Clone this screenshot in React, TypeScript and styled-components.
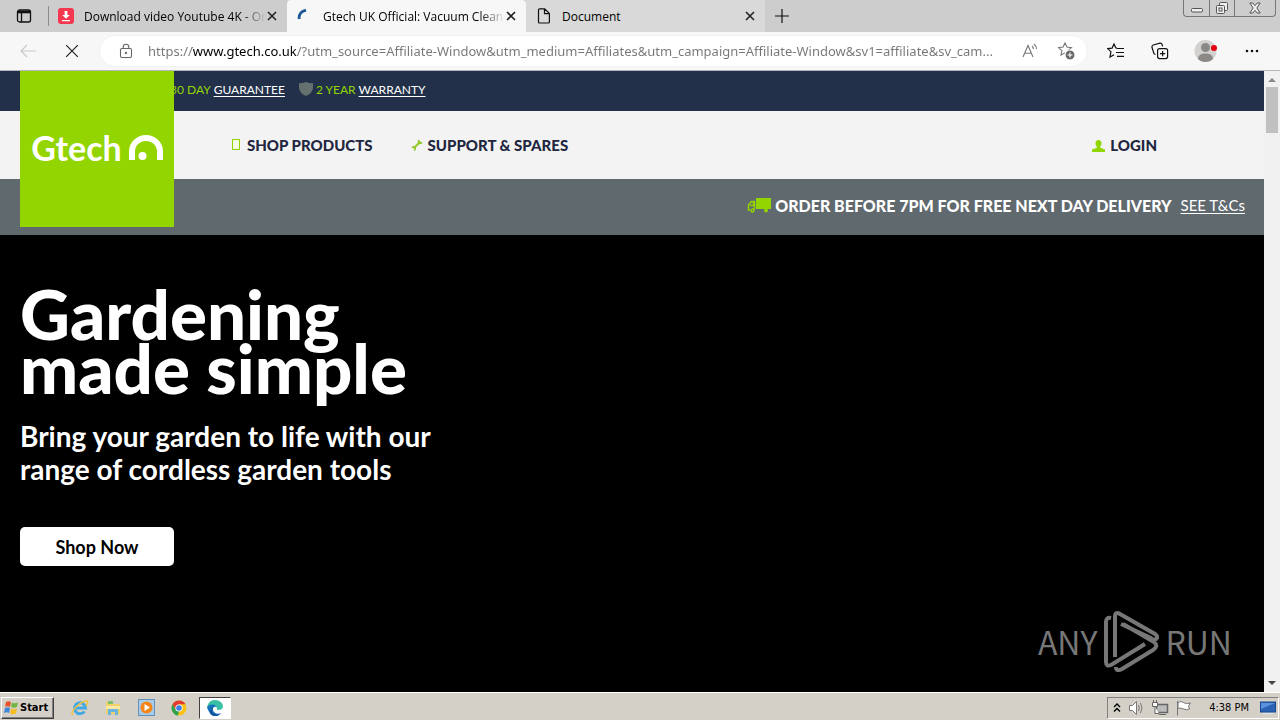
import React from "react";
import styled, { createGlobalStyle } from "styled-components";

const ui = `"Open Sans", "Noto Sans", sans-serif`;
const brand = `Lato, "Open Sans", sans-serif`;
const classic = `"DejaVu Sans Condensed", "DejaVu Sans", sans-serif`;

const GlobalStyle = createGlobalStyle`
  * { box-sizing: border-box; }
  body { margin: 0; background: #d4d0c8; }
  button { margin: 0; padding: 0; border: 0; background: none; color: inherit; font: inherit; cursor: pointer; }
  svg { display: block; flex: none; }
  h1, p { margin: 0; }
`;

const Screen = styled.div`
  display: flex;
  flex-direction: column;
  min-height: 100vh;
  font-family: ${ui};
`;

/* Browser chrome */

const TabStrip = styled.div`
  display: flex;
  height: 32px;
  background: #cdcdcd;
  color: #000;
  font-size: 12px;
`;

const TabMenu = styled.button`
  display: flex;
  align-items: center;
  justify-content: center;
  width: 48px;
  height: 32px;
`;

const Tab = styled.div<{ $active?: boolean; $pale?: boolean }>`
  display: flex;
  align-items: center;
  width: 239px;
  height: 32px;
  padding: 0 10px;
  background: ${(p) => (p.$active ? "#f7f7f7" : p.$pale ? "#d9d9d9" : "transparent")};
  border-radius: ${(p) => (p.$active ? "4px 4px 0 0" : "0")};
`;

const TabRule = styled.span`
  width: 1px;
  height: 20px;
  align-self: center;
  margin-right: -1px;
  background: #8c8c8c;
`;

const TabTitle = styled.button<{ $fade?: boolean }>`
  flex: 1;
  min-width: 0;
  margin: 0 1px 0 10px;
  text-align: left;
  white-space: nowrap;
  ${(p) => p.$fade && "mask-image: linear-gradient(to right, #000 86%, transparent);"}
`;

const IconButton = styled.button`
  display: flex;
  align-items: center;
  justify-content: center;
`;

const NewTab = styled(IconButton)`
  width: 34px;
  height: 32px;
`;

const WindowButtons = styled.div`
  display: flex;
  height: 17px;
  margin: 0 4px 0 auto;
  border: 1px solid #777;
  border-top: 0;
  border-radius: 0 0 4px 4px;
`;

const WindowButton = styled(IconButton)<{ $wide?: boolean }>`
  width: ${(p) => (p.$wide ? "41px" : "25px")};
  & + & { border-left: 1px solid #777; }
`;

const Toolbar = styled.div`
  display: flex;
  align-items: center;
  height: 39px;
  padding-right: 6px;
  background: #f7f7f7;
  border-bottom: 1px solid #b4b7be;
`;

const ToolButton = styled(IconButton)<{ $width: number }>`
  width: ${(p) => p.$width}px;
  height: 32px;
`;

const AddressBar = styled.label`
  display: flex;
  align-items: center;
  flex: 1;
  height: 32px;
  margin-left: 12px;
  margin-right: 6px;
  padding: 0 12px 0 18px;
  gap: 14px;
  background: #fff;
  border: 1px solid #f1f1f1;
  border-radius: 16px;
`;

const Address = styled.input`
  flex: 1;
  min-width: 0;
  height: 24px;
  padding: 0;
  border: 0;
  outline: 0;
  font: 13px/24px "Noto Sans", ${ui};
  color: transparent;
  background: linear-gradient(to right, #767676 44px, #000 44px, #000 149px, #767676 149px);
  -webkit-background-clip: text;
  background-clip: text;
  text-overflow: ellipsis;
`;

/* Web page */

const Viewport = styled.div`
  display: flex;
  flex: 1;
`;

const Page = styled.div`
  position: relative;
  display: flex;
  flex-direction: column;
  flex: 1;
  min-width: 0;
  font-family: ${brand};
`;

const Logo = styled.a`
  position: absolute;
  top: 0;
  left: 20px;
  display: flex;
  align-items: center;
  justify-content: center;
  gap: 7px;
  width: 154px;
  height: 156px;
  padding-bottom: 4px;
  background: #93d500;
  color: #fff;
  font-size: 34px;
  font-weight: 700;
  text-decoration: none;
`;

const Promises = styled.div`
  display: flex;
  align-items: center;
  gap: 14px;
  height: 40px;
  padding: 0 20px 4px 170px;
  background: #22304a;
  color: #93d500;
  font-size: 12px;
`;

const Guarantee = styled.span`
  display: flex;
  align-items: center;
  gap: 3px;
`;

const WhiteLink = styled.a`
  color: #fff;
  text-underline-offset: 2px;
`;

const Nav = styled.nav`
  display: flex;
  align-items: center;
  height: 68px;
  padding: 0 107px 0 230px;
  gap: 38px;
  background: #f3f3f3;
`;

const NavLink = styled.a<{ $end?: boolean }>`
  display: flex;
  align-items: center;
  gap: 5px;
  margin-left: ${(p) => (p.$end ? "auto" : "0")};
  color: #22263f;
  font-size: 15px;
  font-weight: 900;
  text-decoration: none;
  white-space: nowrap;
`;

const Delivery = styled.div`
  display: flex;
  align-items: center;
  justify-content: flex-end;
  gap: 4px;
  height: 56px;
  padding: 0 19px 4px 190px;
  background: #60696e;
  color: #fff;
  font-size: 16px;
  font-weight: 900;
  white-space: nowrap;
`;

const Terms = styled(WhiteLink)`
  margin-left: 5px;
  font-size: 15px;
  font-weight: 400;
`;

const Hero = styled.main`
  flex: 1;
  padding: 52px 20px 126px;
  background: #000;
  color: #fff;
`;

const Title = styled.h1`
  font-size: 69px;
  line-height: 54px;
  font-weight: 900;
`;

const Subtitle = styled.p`
  margin-top: 25px;
  font-size: 28px;
  line-height: 33px;
  font-weight: 700;
`;

const ShopButton = styled.button`
  width: 154px;
  height: 39px;
  margin-top: 41px;
  background: #fff;
  border-radius: 5px;
  color: #000;
  font-size: 18px;
  font-weight: 700;
`;

const Scrollbar = styled.div`
  display: flex;
  flex-direction: column;
  align-items: center;
  width: 16px;
  padding: 6px 0;
  background: #f1f1f1;
`;

const Thumb = styled.div`
  width: 12px;
  height: 46px;
  margin: 5px 0 auto;
  background: #c1c1c1;
`;

const Watermark = styled.div`
  position: absolute;
  right: 32px;
  bottom: 20px;
  display: flex;
  align-items: center;
  gap: 6px;
  color: #777;
  font: 400 32px/62px "Noto Sans CJK SC", "Liberation Sans", sans-serif;
`;

/* Desktop task bar */

const Taskbar = styled.footer`
  display: flex;
  align-items: center;
  height: 28px;
  padding: 2px 0 0 1px;
  border-top: 1px solid #fff;
  box-shadow: inset 0 1px #d4d0c8;
  background: #d4d0c8;
  font: 11px/14px ${classic};
`;

const Start = styled.button`
  display: flex;
  align-items: center;
  gap: 1px;
  width: 53px;
  height: 22px;
  margin-right: 10px;
  padding-left: 2px;
  border: 1px solid;
  border-color: #fff #404040 #404040 #fff;
  box-shadow: inset -1px -1px #808080;
  font-weight: 700;
`;

const Launcher = styled(IconButton)<{ $pressed?: boolean }>`
  width: 32px;
  height: 22px;
  margin-left: ${(p) => (p.$pressed ? "3px" : "0")};
  margin-right: 1px;
  ${(p) => p.$pressed && "background: #fff; border: 1px solid; border-color: #404040 #fff #fff #404040;"}
`;

const Tray = styled.div`
  display: flex;
  align-items: center;
  gap: 6px;
  height: 22px;
  margin: 0 1px 0 auto;
  padding: 0 2px 0 5px;
  border: 1px solid;
  border-color: #808080 #fff #fff #808080;
`;

const Clock = styled.time`
  margin: 0 5px 0 10px;
`;

const Close = () => (
  <svg width="10" height="10" viewBox="0 0 10 10" stroke="#222" strokeWidth="1.6">
    <path d="M1 1l8 8M9 1L1 9" />
  </svg>
);

const STAR = "M7 1l1.9 4.1 4.5.5-3.3 3 .9 4.4L7 10.8 3 13l.9-4.4-3.3-3 4.5-.5z";

const LINK =
  "https://www.gtech.co.uk/?utm_source=Affiliate-Window&utm_medium=Affiliates&utm_campaign=Affiliate-Window&sv1=affiliate&sv_cam...";

function BrowserChrome() {
  return (
    <header>
      <TabStrip>
        <TabMenu aria-label="Tab actions">
          <svg width="16" height="16" viewBox="0 0 16 16" fill="none" stroke="#111" strokeWidth="1.3">
            <rect x="1.5" y="2" width="13" height="12" rx="2" />
            <path d="M2 4h12" strokeWidth="2.6" />
            <path d="M5.5 5v9" />
          </svg>
        </TabMenu>
        <TabRule />
        <Tab>
          <svg width="16" height="16" viewBox="0 0 16 16">
            <rect width="16" height="16" rx="3" fill="#f5384f" />
            <path d="M6.6 3h2.8v4h2.4L8 10.8 4.2 7h2.4zM4 12h8v1.3H4z" fill="#fff" />
          </svg>
          <TabTitle $fade>Download video Youtube 4K - On</TabTitle>
          <IconButton aria-label="Close tab"><Close /></IconButton>
        </Tab>
        <Tab $active>
          <svg width="16" height="16" viewBox="0 0 16 16" fill="none" stroke="#1b5793" strokeWidth="2.8">
            <path d="M2 11Q1.500 4 9 2.200" />
          </svg>
          <TabTitle $fade>Gtech UK Official: Vacuum Clean</TabTitle>
          <IconButton aria-label="Close tab"><Close /></IconButton>
        </Tab>
        <Tab $pale>
          <svg width="16" height="16" viewBox="0 0 16 16" fill="none" stroke="#111" strokeWidth="1.2">
            <path d="M3.5.8h5.2L13.4 5.5V14a1 1 0 0 1-1 1H3.5a1 1 0 0 1-1-1V1.8a1 1 0 0 1 1-1zM8.5 1v4.7h4.7" />
          </svg>
          <TabTitle>Document</TabTitle>
          <IconButton aria-label="Close tab"><Close /></IconButton>
        </Tab>
        <NewTab aria-label="New tab">
          <svg width="14" height="14" viewBox="0 0 14 14" stroke="#111" strokeWidth="1.2">
            <path d="M7 0v14M0 7h14" />
          </svg>
        </NewTab>
        <WindowButtons>
          <WindowButton aria-label="Minimise">
            <svg width="12" height="12" viewBox="0 0 12 12" fill="#eee" stroke="#555">
              <rect x=".5" y="6.5" width="11" height="3.5" rx="1" />
            </svg>
          </WindowButton>
          <WindowButton aria-label="Restore">
            <svg width="14" height="14" viewBox="0 0 14 14" fill="#eee" stroke="#555">
              <rect x="4.5" y="1.5" width="8" height="8" rx="1" />
              <rect x="1.5" y="4.5" width="8" height="8" rx="1" />
              <rect x="4" y="7" width="3" height="3" />
            </svg>
          </WindowButton>
          <WindowButton $wide aria-label="Close window">
            <svg width="12" height="12" viewBox="0 0 12 12" fill="#eee" stroke="#555">
              <path d="M.8 1h3L6 3.7 8.2 1h3L7.8 6l3.4 5h-3L6 8.3 3.8 11h-3L4.2 6z" />
            </svg>
          </WindowButton>
        </WindowButtons>
      </TabStrip>
      <Toolbar>
        <ToolButton $width={56} aria-label="Back">
          <svg width="16" height="14" viewBox="0 0 16 14" fill="none" stroke="#c9c9c9" strokeWidth="1.2">
            <path d="M7 1L1 7l6 6M1 7h15" />
          </svg>
        </ToolButton>
        <ToolButton $width={31} aria-label="Stop loading">
          <svg width="12" height="12" viewBox="0 0 12 12" stroke="#222" strokeWidth="1.2">
            <path d="M0 0l12 12M12 0L0 12" />
          </svg>
        </ToolButton>
        <AddressBar>
          <svg width="16" height="16" viewBox="0 0 16 16" fill="none" stroke="#666" strokeWidth="1.1">
            <rect x="2.5" y="5.5" width="11" height="9" rx="1.5" />
            <path d="M5.2 5.5V4a2.8 2.8 0 0 1 5.6 0v1.5" />
            <circle cx="8" cy="10" r=".6" fill="#666" />
          </svg>
          <Address aria-label="Address" defaultValue={LINK} />
          <IconButton aria-label="Read aloud">
            <svg width="21" height="16" viewBox="0 0 21 16" fill="none" stroke="#777" strokeWidth="1.1">
              <path d="M1 14L6 2.5 11 14M2.6 10.3h6.8M10 3q1.4 1.3 1.4 3M12 1q2.5 2.2 2.5 5" />
            </svg>
          </IconButton>
          <IconButton aria-label="Add to favourites">
            <svg width="18" height="18" viewBox="0 0 18 18" fill="none" stroke="#777" strokeWidth="1.1">
              <path d={STAR} transform="translate(1 0)" />
              <circle cx="13" cy="13" r="5" fill="#666" stroke="#fff" />
              <path d="M13 10.5v5M10.5 13h5" stroke="#fff" />
            </svg>
          </IconButton>
        </AddressBar>
        <ToolButton $width={44} aria-label="Favourites">
          <svg width="18" height="16" viewBox="0 0 18 16" fill="none" stroke="#111" strokeWidth="1.2">
            <path d="M10 5.2L8.9 5 7 1 5.1 5.1.6 5.6l3.3 3L3 14l4-2.3M10 5.5h7M9 9.5h8M10 13.3h7" />
          </svg>
        </ToolButton>
        <ToolButton $width={44} aria-label="Collections">
          <svg width="18" height="18" viewBox="0 0 18 18" fill="none" stroke="#111" strokeWidth="1.2">
            <rect x="6.6" y="6.6" width="10" height="10" rx="2" />
            <path d="M11.6 9v5.2M9 11.6h5.2M4.5 12.5L3 11.7 1 5.5Q.6 3.6 2.3 3L9 1.2q1.6-.2 2 1.2l.6 2" />
          </svg>
        </ToolButton>
        <ToolButton $width={48} aria-label="Profile">
          <svg width="24" height="24" viewBox="0 0 24 24">
            <circle cx="11.500" cy="12" r="11" fill="#d3d1cf" />
            <circle cx="11.500" cy="8.500" r="4.500" fill="#8b8886" />
            <path d="M4 20q0-5.500 7.500-5.500T19 20q-3 3-7.500 3T4 20z" fill="#8b8886" />
            <circle cx="20" cy="9" r="3" fill="#e3000f" />
          </svg>
        </ToolButton>
        <ToolButton $width={44} aria-label="Settings and more">
          <svg width="14" height="4" viewBox="0 0 14 4" fill="#111">
            <circle cx="2" cy="2" r="1.3" /><circle cx="7" cy="2" r="1.3" /><circle cx="12" cy="2" r="1.3" />
          </svg>
        </ToolButton>
      </Toolbar>
    </header>
  );
}

function Site() {
  return (
    <Page>
      <Promises>
        <Guarantee><span>30 DAY</span><WhiteLink href="#guarantee">GUARANTEE</WhiteLink></Guarantee>
        <Guarantee>
          <svg width="14" height="14" viewBox="0 0 14 14">
            <path d="M0 1q4 .6 7-1 3 1.600 7 1v5q-.5 5-7 8-6.500-3-7-8z" fill="#65716f" />
          </svg>
          <span>2 YEAR</span><WhiteLink href="#warranty">WARRANTY</WhiteLink>
        </Guarantee>
      </Promises>
      <Nav>
        <NavLink href="#products">
          <svg width="12" height="12" viewBox="0 0 12 12" fill="#f5fbe4" stroke="#93d500">
            <rect x="2.500" y=".5" width="7" height="10" />
          </svg>
          SHOP PRODUCTS
        </NavLink>
        <NavLink href="#support">
          <svg width="12" height="12" viewBox="0 0 12 12" fill="none" stroke="#93c92a">
            <path d="M2.500 9.500l7-7" strokeWidth="2.200" />
            <path d="M8 .8Q6.500 3 8.200 4t3-.6M.8 8.500q2-1.400 3 .1t-.6 2.900" strokeWidth="1.500" />
          </svg>
          SUPPORT &amp; SPARES
        </NavLink>
        <NavLink href="#login" $end>
          <svg width="13" height="13" viewBox="0 0 13 13" fill="#93d500">
            <path d="M3.500 4.500a3 3.500 0 0 1 6 0q0 2-1.300 3v1.200L13 10.500V13H0v-2.500l4.800-1.800V7.500q-1.300-1-1.300-3z" />
          </svg>
          LOGIN
        </NavLink>
      </Nav>
      <Delivery>
        <svg width="24" height="16" viewBox="0 0 24 16">
          <path d="M9 1h15v11H9z" fill="#93d500" />
          <path d="M8 4.500H4.500L1.500 8v5H3M3 8.500h3.500V5M7.500 4.500v8" fill="none" stroke="#93d500" strokeWidth="1.500" />
          <circle cx="5.500" cy="13.500" r="1.500" fill="none" stroke="#93d500" strokeWidth="1.400" />
          <circle cx="19" cy="13.500" r="2" fill="#93d500" />
        </svg>
        ORDER BEFORE 7PM FOR FREE NEXT DAY DELIVERY
        <Terms href="#terms">SEE T&amp;Cs</Terms>
      </Delivery>
      <Logo href="#home">
        Gtech
        <svg width="34" height="25" viewBox="0 0 34 25">
          <path d="M3 25V16.500A14 13.500 0 0 1 31 16.500V25" fill="none" stroke="#fff" strokeWidth="6" />
          <circle cx="13.500" cy="21" r="4" fill="#fff" />
        </svg>
      </Logo>
      <Hero>
        <Title>Gardening<br />made simple</Title>
        <Subtitle>Bring your garden to life with our<br />range of cordless garden tools</Subtitle>
        <ShopButton>Shop Now</ShopButton>
      </Hero>
      <Watermark>
        ANY
        <svg width="56" height="62" viewBox="0 0 56 62" fill="none" stroke="#777" strokeWidth="4">
          <path d="M8 8Q3 7 3 12v40q0 5 5 3l34-21M12 47V7q0-6 5-3l35 20q4 3 1 5t-5-1L18 14M13 57q0 5 6 2l31-19q6-4 1-8L20 14" />
        </svg>
        RUN
      </Watermark>
    </Page>
  );
}

function Desktop() {
  return (
    <Taskbar>
      <Start>
        <svg width="15" height="15" viewBox="0 0 15 15">
          <path d="M2 2q2.500-1.500 5 0L6 7Q3.500 5.500 1 7z" fill="#e8532a" />
          <path d="M8 2.500q2.500 1.500 6 0L13 7q-3 1.500-6 0z" fill="#73b743" />
          <path d="M1 8q2.500-1.500 5 0l-1 5q-2.500-1.500-5 0z" fill="#3f87d9" />
          <path d="M7 8.500q3 1.500 6 0l-1 5q-3 1.500-6 0z" fill="#f6bd23" />
        </svg>
        Start
      </Start>
      <Launcher aria-label="Internet Explorer">
        <svg width="18" height="18" viewBox="0 0 18 18" fill="none">
          <path d="M13.500 12.500A5.500 5.500 0 1 1 14.500 9H5" stroke="#43a7e2" strokeWidth="3" />
          <path d="M2 16Q-1 14 5 8t11-6q2 1-1 5" stroke="#efc33b" strokeWidth="1.400" />
        </svg>
      </Launcher>
      <Launcher aria-label="Explorer">
        <svg width="18" height="18" viewBox="0 0 18 18">
          <path d="M2 3h5l1 2h8v10H2z" fill="#f0d06d" />
          <path d="M4 2h5v3H4z" fill="#7dc26b" />
          <path d="M2 7h14v3H2z" fill="#fbe9a5" />
          <path d="M4 10h10v6h-3v-3H7v3H4z" fill="#67b4df" />
        </svg>
      </Launcher>
      <Launcher aria-label="Media Player">
        <svg width="17" height="17" viewBox="0 0 17 17">
          <rect x=".5" y=".5" width="16" height="16" fill="#a9cbe8" stroke="#5e92bd" />
          <circle cx="8.500" cy="8.500" r="6" fill="#f58518" />
          <path d="M6.500 5l5.500 3.500L6.500 12z" fill="#fff" />
        </svg>
      </Launcher>
      <Launcher aria-label="Chrome">
        <svg width="16" height="16" viewBox="0 0 16 16">
          <circle cx="8" cy="8" r="7.500" fill="#fbc116" />
          <path d="M1.500 4.300a7.500 7.500 0 0 1 13 0H8L4.800 9.800z" fill="#e33b2e" />
          <path d="M1.500 4.300L4.800 10 8 11.500l-1 4A7.500 7.500 0 0 1 1.500 4.300z" fill="#2da14e" />
          <circle cx="8" cy="8" r="3.600" fill="#fff" />
          <circle cx="8" cy="8" r="2.800" fill="#3f7ee8" />
        </svg>
      </Launcher>
      <Launcher $pressed aria-label="Edge">
        <svg width="16" height="16" viewBox="0 0 16 16">
          <path d="M0 8Q1 0 8 0t8 6.500Q15.500 10 11 10q-2-.5-1-2 0-3-4-3T0 8z" fill="#39bfa4" />
          <path d="M0 7.500Q2 4 6 4.500q4 .5 4 3.500-1-2-3-1-2.500 2 0 5t7 1Q11 16.500 7 16T0 7.500z" fill="#1673bd" />
          <path d="M6.500 7q-3 4 .5 6.500t7-.5q-4 5-8.500 2.500T4 9q1-2 2.500-2z" fill="#12559d" />
        </svg>
      </Launcher>
      <Tray>
        <svg width="8" height="10" viewBox="0 0 8 10" fill="none" stroke="#000" strokeWidth="1.400">
          <path d="M1 4l3-3 3 3M1 8.500l3-3 3 3" />
        </svg>
        <svg width="18" height="16" viewBox="0 0 18 16" fill="#fff" stroke="#777">
          <path d="M2.500 5.500h3l4-4v13l-4-4h-3z" />
          <path d="M11.500 5q1.500 3 0 6M13.500 3q3 5 0 10" fill="none" />
        </svg>
        <svg width="18" height="16" viewBox="0 0 18 16" fill="#fff" stroke="#666">
          <rect x="5.500" y="4.500" width="11" height="8" fill="#bbb" strokeWidth="1.500" />
          <path d="M8 14.500h7M1.500 2.500h5v4h-5zM4 6.500v7h4M2.500 0v2.500M5.500 0v2.500" />
        </svg>
        <svg width="18" height="16" viewBox="0 0 18 16" fill="#fff" stroke="#777">
          <path d="M2.500 1v14.500M3 2.500q3-2 5.500 0t7 .5l-2 3 1 3q-3 1.500-6 0T3 8.500z" />
        </svg>
        <Clock>4:38 PM</Clock>
        <svg width="16" height="14" viewBox="0 0 16 14">
          <rect x=".5" y="1" width="15" height="10" fill="#2c62b4" stroke="#17488e" />
          <path d="M1 2h14L1 8z" fill="#5b93dc" />
          <path d="M3 12.500h10" stroke="#d9e6f5" />
        </svg>
      </Tray>
    </Taskbar>
  );
}

export default function App() {
  return (
    <Screen>
      <GlobalStyle />
      <BrowserChrome />
      <Viewport>
        <Site />
        <Scrollbar>
          <svg width="8" height="5" viewBox="0 0 8 5"><path d="M0 5l4-4 4 4z" fill="#8a8a8a" /></svg>
          <Thumb />
          <svg width="8" height="5" viewBox="0 0 8 5"><path d="M0 0l4 4 4-4z" fill="#444" /></svg>
        </Scrollbar>
      </Viewport>
      <Desktop />
    </Screen>
  );
}
